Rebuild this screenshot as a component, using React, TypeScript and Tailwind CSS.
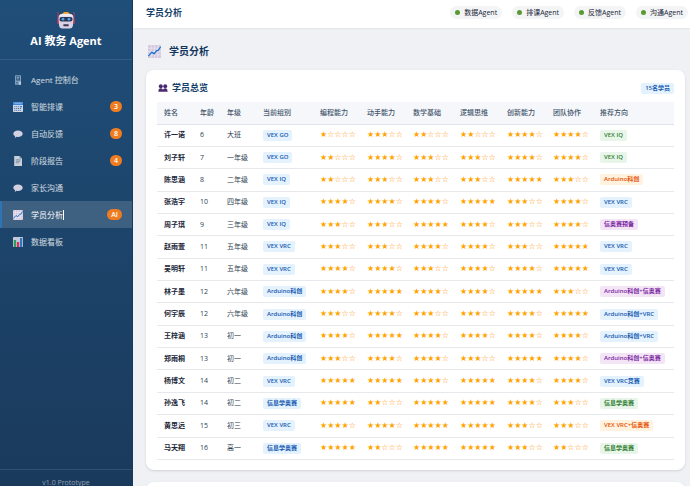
import type { ReactNode } from "react";
import clsx from "clsx";

type Tone = "blue" | "green" | "orange" | "purple";

interface Student {
  name: string;
  age: number;
  grade: string;
  group: string;
  scores: number[];
  direction: string;
  tone: Tone;
}

const students: Student[] = [
  { name: "许一诺", age: 6, grade: "大班", group: "VEX GO", scores: [1, 3, 2, 2, 4, 4], direction: "VEX IQ", tone: "green" },
  { name: "刘子轩", age: 7, grade: "一年级", group: "VEX GO", scores: [2, 4, 3, 3, 4, 4], direction: "VEX IQ", tone: "green" },
  { name: "陈思涵", age: 8, grade: "二年级", group: "VEX IQ", scores: [2, 3, 3, 3, 5, 3], direction: "Arduino科创", tone: "orange" },
  { name: "张浩宇", age: 10, grade: "四年级", group: "VEX IQ", scores: [4, 4, 4, 5, 3, 4], direction: "VEX VRC", tone: "blue" },
  { name: "周子琪", age: 9, grade: "三年级", group: "VEX IQ", scores: [3, 3, 5, 4, 3, 4], direction: "信奥赛预备", tone: "purple" },
  { name: "赵雨萱", age: 11, grade: "五年级", group: "VEX VRC", scores: [3, 3, 4, 4, 3, 5], direction: "VEX VRC", tone: "blue" },
  { name: "吴明轩", age: 11, grade: "五年级", group: "VEX VRC", scores: [4, 4, 3, 4, 4, 5], direction: "VEX VRC", tone: "blue" },
  { name: "林子墨", age: 12, grade: "六年级", group: "Arduino科创", scores: [4, 5, 4, 4, 5, 3], direction: "Arduino科创+信奥赛", tone: "purple" },
  { name: "何宇辰", age: 12, grade: "六年级", group: "Arduino科创", scores: [3, 4, 3, 3, 4, 5], direction: "Arduino科创+VRC", tone: "blue" },
  { name: "王梓涵", age: 13, grade: "初一", group: "Arduino科创", scores: [4, 5, 4, 4, 4, 4], direction: "Arduino科创+VRC", tone: "blue" },
  { name: "郑雨桐", age: 13, grade: "初一", group: "Arduino科创", scores: [3, 4, 4, 3, 5, 4], direction: "Arduino科创+信奥赛", tone: "purple" },
  { name: "杨博文", age: 14, grade: "初二", group: "VEX VRC", scores: [5, 5, 4, 5, 4, 4], direction: "VEX VRC竞赛", tone: "blue" },
  { name: "孙逸飞", age: 14, grade: "初二", group: "信息学奥赛", scores: [5, 2, 5, 5, 4, 3], direction: "信息学奥赛", tone: "green" },
  { name: "黄思远", age: 15, grade: "初三", group: "VEX VRC", scores: [4, 4, 5, 5, 3, 3], direction: "VEX VRC+信奥赛", tone: "orange" },
  { name: "马天翔", age: 16, grade: "高一", group: "信息学奥赛", scores: [5, 2, 5, 5, 3, 2], direction: "信息学奥赛", tone: "green" },
];

const columns = [
  { label: "姓名", width: "w-[36px]" },
  { label: "年龄", width: "w-[27px]" },
  { label: "年级", width: "w-[36px]" },
  { label: "当前组别", width: "w-[57px]" },
  { label: "编程能力", width: "w-[47px]" },
  { label: "动手能力", width: "w-[46px]" },
  { label: "数学基础", width: "w-[47px]" },
  { label: "逻辑思维", width: "w-[47px]" },
  { label: "创新能力", width: "w-[46px]" },
  { label: "团队协作", width: "w-[47px]" },
  { label: "推荐方向", width: "w-[81px]" },
];

const tones: Record<Tone, string> = {
  blue: "bg-[#e3f2fd] text-[#1558b0]",
  green: "bg-[#e8f5e9] text-[#2e7d32]",
  orange: "bg-[#fff3e0] text-[#e65100]",
  purple: "bg-[#f3e5f5] text-[#7b1fa2]",
};

function RobotIcon() {
  return (
    <svg viewBox="0 0 18 18" className="size-[18px]">
      <path d="M1 1v12M17 1v12" stroke="#c2385a" strokeWidth="1" />
      <rect x="0.3" y="8" width="2" height="5" rx="1" fill="#b33a5e" />
      <rect x="15.7" y="8" width="2" height="5" rx="1" fill="#b33a5e" />
      <path d="M5.500 3c0-2.600 7-2.600 7 0z" fill="#f5a61d" />
      <path d="M1.500 7c0-3 2-4.300 4-4.300h7c2 0 4 1.300 4 4.300l-.6 7.500c-.2 2-1.400 3-3.100 3H5.200c-1.700 0-2.900-1-3.100-3z" fill="#d9d2e6" />
      <path d="M2 5.500c.7-2 2-2.600 3.500-2.600h7c1.500 0 2.800.6 3.500 2.600" fill="#efeaf6" />
      <rect x="2.500" y="6" width="13" height="4.600" rx="2" fill="#2b3654" />
      <circle cx="6" cy="8.200" r="1.400" fill="#4ba3e8" />
      <circle cx="12" cy="8.200" r="1.400" fill="#4ba3e8" />
      <rect x="6.300" y="13.200" width="5.400" height="2" rx="0.600" fill="#40374f" />
    </svg>
  );
}

function ComputerIcon() {
  return (
    <svg viewBox="0 0 10 10" className="size-[10px]">
      <rect x="2" y="0.300" width="6" height="9.400" rx="0.500" fill="#7fa0be" />
      <rect x="3" y="1.300" width="4" height="4.200" fill="#34597d" />
      <path d="M3.700 2.400h2.600M3.700 3.900h2" stroke="#a9c5dd" strokeWidth="0.700" />
      <path d="M3 7.800h2" stroke="#34597d" strokeWidth="0.900" />
      <path d="M6 6.800h2v2.900H6z" fill="#b9cbdc" />
    </svg>
  );
}

function CalendarIcon() {
  return (
    <svg viewBox="0 0 10 10" className="size-[10px]">
      <rect width="10" height="10" rx="0.800" fill="#cfd9ea" />
      <path d="M0 .8Q0 0 .8 0h8.400q.8 0 .8.800V3H0z" fill="#3d87d6" />
      <path d="M1.500 1.200h7" stroke="#a9cdf2" strokeWidth="0.800" />
      <path d="M1.200 4.700h5.200M1.200 6.500h7.600M1.200 8.300h7.600" stroke="#5c789f" strokeWidth="1" strokeDasharray="1.200 0.700" />
      <path d="M7 4h2v1.500H7z" fill="#3d87d6" />
    </svg>
  );
}

function SpeechIcon() {
  return (
    <svg viewBox="0 0 10 10" className="size-[10px]">
      <path d="M5 1.500c2.700 0 4.700 1.400 4.700 3.200S7.700 8 5 8c-.5 0-1 0-1.400-.2L1.800 9l.3-1.900C1 6.500.3 5.700.3 4.700.3 2.900 2.300 1.500 5 1.500z" fill="#d3d0e2" />
    </svg>
  );
}

function DocumentIcon() {
  return (
    <svg viewBox="0 0 10 10" className="size-[10px]">
      <path d="M1.200 0h5.300L9 2.500V10H1.200z" fill="#c9d0da" />
      <path d="M6.500 0v2.500H9z" fill="#8394a9" />
      <path d="M2.800 3.800h4.600M2.800 5.300h4.600M2.800 6.800h3" stroke="#5f7a94" strokeWidth="0.700" />
    </svg>
  );
}

function ChartUpIcon({ className }: { className: string }) {
  return (
    <svg viewBox="0 0 12 12" className={className}>
      <rect width="12" height="12" rx="0.800" fill="#d5cbe0" />
      <path d="M3 0v12M6 0v12M9 0v12M0 3h12M0 6h12M0 9h12" stroke="#eee8f3" strokeWidth="0.600" />
      <path d="M.3 10.300 3.600 6.600l2 1.500L8 5.200h1.200l2.500-3.500" fill="none" stroke="#2273cf" strokeWidth="1.200" />
    </svg>
  );
}

function BarChartIcon() {
  return (
    <svg viewBox="0 0 10 10" className="size-[10px]">
      <rect width="10" height="10" rx="0.600" fill="#c6c7d7" />
      <path d="M.8 3h2.300v7H.8z" fill="#2e9b61" />
      <path d="M3.900 5h2.300v5H3.900z" fill="#d92f55" />
      <path d="M7 1h2.200v9H7z" fill="#2b77c4" />
    </svg>
  );
}

function PeopleIcon() {
  return (
    <svg viewBox="0 0 10 8" className="h-[8px] w-[10px]">
      <g fill="#4b2a70">
        <circle cx="2.800" cy="2.300" r="2" />
        <circle cx="7.200" cy="2.300" r="2" />
        <path d="M.4 7.800c0-2.300.6-3.600 2.400-3.600s2.100 1 2.200 2.200c.1-1.200.4-2.200 2.200-2.200s2.400 1.300 2.400 3.600z" />
      </g>
    </svg>
  );
}

const navItems: { label: string; icon: ReactNode; badge?: string; active?: boolean }[] = [
  { label: "Agent 控制台", icon: <ComputerIcon /> },
  { label: "智能排课", icon: <CalendarIcon />, badge: "3" },
  { label: "自动反馈", icon: <SpeechIcon />, badge: "8" },
  { label: "阶段报告", icon: <DocumentIcon />, badge: "4" },
  { label: "家长沟通", icon: <SpeechIcon /> },
  { label: "学员分析", icon: <ChartUpIcon className="size-[10px]" />, badge: "AI", active: true },
  { label: "数据看板", icon: <BarChartIcon /> },
];

const agents = ["数据Agent", "排课Agent", "反馈Agent", "沟通Agent"];

function Tag({ tone, children }: { tone: Tone; children: ReactNode }) {
  return (
    <span className={clsx("inline-block rounded-[2px] px-1 text-[6px] leading-[11px] font-semibold whitespace-nowrap align-middle", tones[tone])}>
      {children}
    </span>
  );
}

function Stars({ score }: { score: number }) {
  return (
    <span className="block font-['DejaVu_Sans',sans-serif] text-[8px] leading-[10px] whitespace-nowrap text-[#ffa500]">
      {"★".repeat(score)}
      <span className="text-[#ff9100]">{"☆".repeat(5 - score)}</span>
    </span>
  );
}

function Sidebar() {
  return (
    <aside className="flex w-[133px] shrink-0 flex-col overflow-hidden border-r border-[#173a5e] bg-linear-to-b from-[#1f4e79] to-[#1a3a5c] text-white">
      <div className="flex flex-col items-center border-b border-white/10 pt-[11px] pb-[11px]">
        <RobotIcon />
        <h1 className="mt-[5px] text-[11px] leading-[14px] font-bold">AI 教务 Agent</h1>
      </div>

      <nav className="flex flex-1 flex-col pt-[6px]">
        {navItems.map((item) => (
          <a
            key={item.label}
            href="#"
            className={clsx(
              "flex h-[27px] items-center border-l-2 pr-[10px] pl-[11px] text-[8px]",
              item.active ? "border-[#2e75b6] bg-white/15 text-white" : "border-transparent text-white/80"
            )}
          >
            {item.icon}
            <span className="ml-2">{item.label}</span>
            {item.active && <span className="h-[10px] w-px bg-white" />}
            {item.badge && (
              <span className="ml-auto rounded-full bg-[#f07c20] px-1 text-center text-[7px] leading-[11px] font-semibold text-white">
                {item.badge}
              </span>
            )}
          </a>
        ))}
      </nav>

      <div className="h-[17px] border-t border-white/10 pt-2 text-center text-[7px] leading-[10px] text-white/50">
        v1.0 Prototype
      </div>
    </aside>
  );
}

export default function App() {
  return (
    <div className="flex h-screen overflow-hidden bg-[#eff1f5] font-['Open_Sans','Noto_Sans_CJK_SC',sans-serif] text-[#2c3e50]">
      <Sidebar />

      <main className="flex min-w-0 flex-1 flex-col">
        <header className="flex h-[28px] shrink-0 items-center justify-between bg-white pr-[2px] pb-[3px] pl-[13px] shadow-xs">
          <h2 className="text-[9px] font-bold text-[#173f6b]">学员分析</h2>
          <div className="flex gap-[10px]">
            {agents.map((agent) => (
              <span key={agent} className="flex items-center gap-1 rounded-full bg-[#f3f4f5] px-[5px] text-[7px] leading-[13px] text-[#1a2638]">
                <span className="size-[5px] rounded-full bg-[#5a9a32]" />
                {agent}
              </span>
            ))}
          </div>
        </header>

        <div className="flex-1 overflow-hidden pt-[15px] pr-[5px] pl-[13px]">
          <div className="flex h-4 items-center gap-2 pl-[2px]">
            <ChartUpIcon className="size-[13px]" />
            <h2 className="text-[10px] font-bold text-[#12355f]">学员分析</h2>
          </div>

          <section className="mt-[11px] rounded-lg bg-white px-[11px] pt-[11px] pb-[10px] shadow-sm">
            <div className="mb-[7px] flex h-[14px] items-center justify-between">
              <h3 className="flex items-center gap-1 pl-[1px] text-[9px] font-bold text-[#173f6b]">
                <PeopleIcon />
                学员总览
              </h3>
              <Tag tone="blue">15名学员</Tag>
            </div>

            <table className="h-[358px] w-full table-fixed border-collapse text-left text-[7px] leading-[10px]">
              <thead>
                <tr className="h-[22px] border-b border-[#dfe4ea] bg-[#f5f7fa]">
                  {columns.map((column) => (
                    <th key={column.label} className={clsx("pl-[7px] font-medium whitespace-nowrap text-[#44546a]", column.width)}>
                      {column.label}
                    </th>
                  ))}
                </tr>
              </thead>
              <tbody>
                {students.map((student) => (
                  <tr key={student.name} className="border-b border-[#e6e8ec]">
                    <td className="pl-[7px] font-bold text-[#1a2638]">{student.name}</td>
                    <td className="pl-[7px]">{student.age}</td>
                    <td className="pl-[7px]">{student.grade}</td>
                    <td className="pl-[7px]">
                      <Tag tone="blue">{student.group}</Tag>
                    </td>
                    {student.scores.map((score, index) => (
                      <td key={index} className="pl-[7px]">
                        <Stars score={score} />
                      </td>
                    ))}
                    <td className="pl-[7px]">
                      <Tag tone={student.tone}>{student.direction}</Tag>
                    </td>
                  </tr>
                ))}
              </tbody>
            </table>
          </section>

          <section className="mt-3 h-10 rounded-lg bg-white shadow-sm" />
        </div>
      </main>
    </div>
  );
}
